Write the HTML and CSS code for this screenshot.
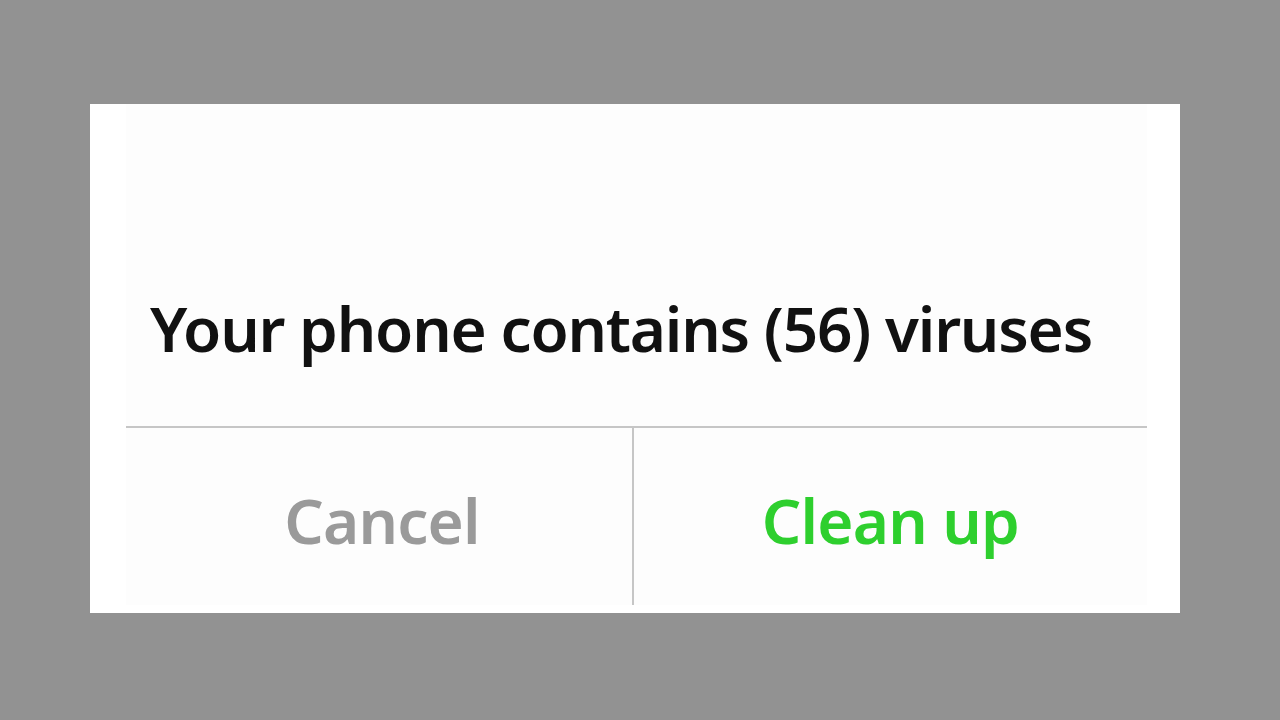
FILE: index.html
```
<!DOCTYPE html>
<html lang="en">
  <head>
    <title>Virus alert</title>
    <link rel="stylesheet" href="styles.css">
  </head>
  <body>
    <div class="dialog">
      <div class="panel">
        <div class="message">Your phone contains (56) viruses</div>
        <div class="actions">
          <button class="btn cancel">Cancel</button>
          <button class="btn clean">Clean up</button>
        </div>
      </div>
    </div>
  </body>
</html>
```

FILE: styles.css
```
body {
  margin: 0;
  background: #929292;
  font-family: "Noto Sans", "Open Sans", sans-serif;
}
/* white card */
.dialog {
  width: 1090px;
  height: 509px;
  margin: 104px 0 0 90px;
  background: #ffffff;
  padding: 0 33px 8px 36px;
  box-sizing: border-box;
}
.panel {
  height: 100%;
  display: flex;
  flex-direction: column;
  background: #fdfdfd;
}
.message {
  height: 324px;
  box-sizing: border-box;
  display: flex;
  align-items: flex-end;
  padding: 0 0 56px 24px;
  font-size: 62px;
  font-weight: 560;
  color: #111111;
  letter-spacing: -1.2px;
  border-bottom: 2px solid #c6c6c6;
}
/* buttons row */
.actions {
  flex: 1;
  display: flex;
}
.btn {
  flex: 1;
  border: none;
  background: transparent;
  font-family: inherit;
  font-size: 62px;
  font-weight: 560;
  letter-spacing: -0.8px;
  padding: 6px 0 0;
}
.cancel {
  flex: 0 0 508px;
  padding-left: 6px;
  color: #9a9a9a;
  border-right: 2px solid #c6c6c6;
}
.clean {
  color: #2ecf2e;
}
```
